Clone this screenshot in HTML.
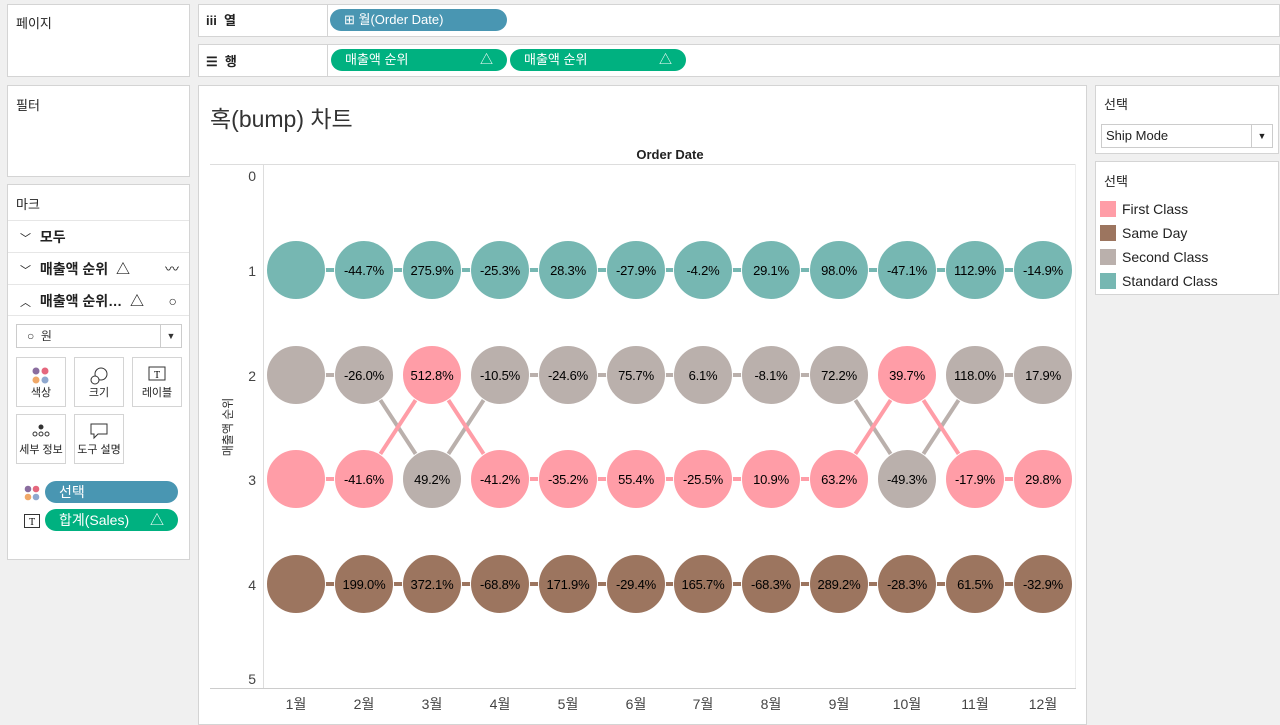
<!DOCTYPE html>
<html><head><meta charset="utf-8"><style>
*{box-sizing:border-box;margin:0;padding:0}
body{width:1280px;height:721px;background:#f0f0f0;font-family:"Liberation Sans","Noto Sans CJK KR",sans-serif;font-size:13px;color:#333;position:relative;overflow:hidden}
.p{position:absolute;background:#fff;border:1px solid #d4d4d4}
.t{position:absolute;font-size:13px;color:#222}
.pill{position:absolute;height:22px;border-radius:11px;color:#fff;font-size:13px;line-height:22px;padding-left:14px}
.g{background:#00b180}.b{background:#4996b2}
.row{position:absolute;left:0;right:0;height:32px;border-top:1px solid #e6e6e6;font-size:13px;font-weight:bold;line-height:32px;padding-left:12px;color:#222}
.row i{font-style:normal;font-weight:normal;font-size:11px;display:inline-block;width:16px}
.btn{position:absolute;width:50px;height:50px;border:1px solid #d4d4d4;background:#fff;font-size:11px;text-align:center;color:#222}
.btn span{position:absolute;bottom:6px;left:0;right:0}
.sw{position:absolute;left:4px;width:16px;height:16px}
.lg{position:absolute;left:26px;font-size:14px;color:#222}
</style></head><body>
<div class="p" style="left:7px;top:4px;width:183px;height:73px"><div class="t" style="left:8px;top:8px">페이지</div></div>
<div class="p" style="left:198px;top:4px;width:1082px;height:33px"></div>
<div class="t" style="left:206px;top:10px;font-weight:bold">iii&nbsp; 열</div>
<div style="position:absolute;left:327px;top:4px;width:1px;height:33px;background:#d4d4d4"></div>
<div class="pill b" style="left:330px;top:9px;width:177px;padding-left:14px">⊞ 월(Order Date)</div>
<div class="p" style="left:198px;top:44px;width:1082px;height:33px"></div>
<div class="t" style="left:206px;top:51px;font-weight:bold">☰&nbsp; 행</div>
<div style="position:absolute;left:327px;top:44px;width:1px;height:33px;background:#d4d4d4"></div>
<div class="pill g" style="left:331px;top:49px;width:176px">매출액 순위<span style="position:absolute;right:14px">△</span></div>
<div class="pill g" style="left:510px;top:49px;width:176px">매출액 순위<span style="position:absolute;right:14px">△</span></div>

<div class="p" style="left:7px;top:85px;width:183px;height:92px"><div class="t" style="left:8px;top:9px">필터</div></div>
<div class="p" style="left:7px;top:184px;width:183px;height:376px">
<div class="t" style="left:8px;top:9px">마크</div>
<div class="row" style="top:35px;font-size:14px"><i>﹀</i> 모두</div>
<div class="row" style="top:67px;font-size:14px"><i>﹀</i> 매출액 순위 &nbsp;△<span style="position:absolute;right:10px;font-weight:normal">〰</span></div>
<div class="row" style="top:99px;font-size:14px;border-bottom:1px solid #e6e6e6"><i>︿</i> 매출액 순위… &nbsp;△<span style="position:absolute;right:12px;font-weight:normal">○</span></div>
<div style="position:absolute;left:8px;top:139px;width:166px;height:24px;border:1px solid #ccc;font-size:12px;line-height:22px;padding-left:10px">○ &nbsp;원<span style="position:absolute;right:0;top:0;width:21px;height:22px;border-left:1px solid #ccc;text-align:center;font-size:9px">▼</span></div>
<div class="btn" style="left:8px;top:172px"><svg width="20" height="20" style="margin-top:8px"><circle cx="5" cy="5" r="3.5" fill="#8a6d9f"/><circle cx="14" cy="5" r="3.5" fill="#e5677d"/><circle cx="5" cy="14" r="3.5" fill="#f0a868"/><circle cx="14" cy="14" r="3.5" fill="#8fa8cf"/></svg><span>색상</span></div>
<div class="btn" style="left:66px;top:172px"><svg width="20" height="20" style="margin-top:8px" fill="none" stroke="#333"><circle cx="12" cy="8" r="6"/><circle cx="6" cy="14" r="4" fill="#fff"/></svg><span>크기</span></div>
<div class="btn" style="left:124px;top:172px"><svg width="18" height="16" style="margin-top:8px"><rect x="1" y="1" width="16" height="13" fill="none" stroke="#333"/><text x="9" y="12" font-size="10" text-anchor="middle" font-family="Liberation Serif">T</text></svg><span>레이블</span></div>
<div class="btn" style="left:8px;top:229px"><svg width="20" height="16" style="margin-top:8px" fill="none" stroke="#333"><circle cx="10" cy="4" r="2" fill="#333"/><circle cx="4" cy="11" r="2"/><circle cx="10" cy="11" r="2"/><circle cx="16" cy="11" r="2"/></svg><span>세부 정보</span></div>
<div class="btn" style="left:66px;top:229px"><svg width="20" height="18" style="margin-top:7px" fill="none" stroke="#333"><path d="M2 2h16v10H9l-4 4v-4H2z"/></svg><span>도구 설명</span></div>
<svg width="16" height="16" style="position:absolute;left:16px;top:300px"><circle cx="4" cy="4" r="3.3" fill="#8a6d9f"/><circle cx="12" cy="4" r="3.3" fill="#e5677d"/><circle cx="4" cy="12" r="3.3" fill="#f0a868"/><circle cx="12" cy="12" r="3.3" fill="#8fa8cf"/></svg>
<div class="pill b" style="left:37px;top:296px;width:133px;font-size:14px">선택</div>
<svg width="16" height="14" style="position:absolute;left:16px;top:329px"><rect x="0.5" y="0.5" width="15" height="13" fill="none" stroke="#333"/><text x="8" y="11" font-size="10" text-anchor="middle" font-family="Liberation Serif">T</text></svg>
<div class="pill g" style="left:37px;top:324px;width:133px;font-size:14px">합계(Sales)<span style="position:absolute;right:14px">△</span></div>
</div>

<div class="p" style="left:198px;top:85px;width:889px;height:640px"></div>
<div class="t" style="left:210px;top:100px;font-size:23px;color:#333">혹(bump) 차트</div>
<svg width="1280" height="721" style="position:absolute;left:0;top:0" font-family="Liberation Sans,Noto Sans CJK KR,sans-serif">
<line x1="210" y1="164.5" x2="1076" y2="164.5" stroke="#ddd"/>
<line x1="210" y1="688.5" x2="1076" y2="688.5" stroke="#ccc"/>
<line x1="263.5" y1="164" x2="263.5" y2="688" stroke="#ddd"/>
<line x1="1075.5" y1="164" x2="1075.5" y2="688" stroke="#eee"/>
<text x="670" y="159" font-size="13" font-weight="bold" text-anchor="middle" fill="#222">Order Date</text>
<g font-size="14" fill="#444" text-anchor="end"><text x="256" y="181">0</text><text x="256" y="276">1</text><text x="256" y="381">2</text><text x="256" y="485">3</text><text x="256" y="590">4</text><text x="256" y="684">5</text></g>
<text transform="translate(232,427) rotate(-90)" font-size="12" fill="#333" text-anchor="middle">매출액 순위</text>
<g font-size="14" fill="#444" text-anchor="middle">
<text x="296" y="709">1월</text><text x="364" y="709">2월</text><text x="432" y="709">3월</text><text x="500" y="709">4월</text><text x="568" y="709">5월</text><text x="636" y="709">6월</text><text x="703" y="709">7월</text><text x="771" y="709">8월</text><text x="839" y="709">9월</text><text x="907" y="709">10월</text><text x="975" y="709">11월</text><text x="1043" y="709">12월</text></g>
<g stroke-width="4" fill="none">
<polyline stroke="#76b7b2" points="296,270 1043,270"/>
<polyline stroke="#9c755f" points="296,584 1043,584"/>
<polyline stroke="#bab0ac" points="296,375 364,375 432,479 500,375 839,375 907,479 975,375 1043,375"/>
<polyline stroke="#ff9da7" points="296,479 364,479 432,375 500,479 839,479 907,375 975,479 1043,479"/>
</g>
<g stroke="#fff" stroke-width="1">
<g fill="#76b7b2"><circle cx="296" cy="270" r="29.5"/><circle cx="364" cy="270" r="29.5"/><circle cx="432" cy="270" r="29.5"/><circle cx="500" cy="270" r="29.5"/><circle cx="568" cy="270" r="29.5"/><circle cx="636" cy="270" r="29.5"/><circle cx="703" cy="270" r="29.5"/><circle cx="771" cy="270" r="29.5"/><circle cx="839" cy="270" r="29.5"/><circle cx="907" cy="270" r="29.5"/><circle cx="975" cy="270" r="29.5"/><circle cx="1043" cy="270" r="29.5"/></g>
<g fill="#9c755f"><circle cx="296" cy="584" r="29.5"/><circle cx="364" cy="584" r="29.5"/><circle cx="432" cy="584" r="29.5"/><circle cx="500" cy="584" r="29.5"/><circle cx="568" cy="584" r="29.5"/><circle cx="636" cy="584" r="29.5"/><circle cx="703" cy="584" r="29.5"/><circle cx="771" cy="584" r="29.5"/><circle cx="839" cy="584" r="29.5"/><circle cx="907" cy="584" r="29.5"/><circle cx="975" cy="584" r="29.5"/><circle cx="1043" cy="584" r="29.5"/></g>
<g fill="#bab0ac"><circle cx="296" cy="375" r="29.5"/><circle cx="364" cy="375" r="29.5"/><circle cx="432" cy="479" r="29.5"/><circle cx="500" cy="375" r="29.5"/><circle cx="568" cy="375" r="29.5"/><circle cx="636" cy="375" r="29.5"/><circle cx="703" cy="375" r="29.5"/><circle cx="771" cy="375" r="29.5"/><circle cx="839" cy="375" r="29.5"/><circle cx="907" cy="479" r="29.5"/><circle cx="975" cy="375" r="29.5"/><circle cx="1043" cy="375" r="29.5"/></g>
<g fill="#ff9da7"><circle cx="296" cy="479" r="29.5"/><circle cx="364" cy="479" r="29.5"/><circle cx="432" cy="375" r="29.5"/><circle cx="500" cy="479" r="29.5"/><circle cx="568" cy="479" r="29.5"/><circle cx="636" cy="479" r="29.5"/><circle cx="703" cy="479" r="29.5"/><circle cx="771" cy="479" r="29.5"/><circle cx="839" cy="479" r="29.5"/><circle cx="907" cy="375" r="29.5"/><circle cx="975" cy="479" r="29.5"/><circle cx="1043" cy="479" r="29.5"/></g>
</g>
<g font-size="13" fill="#000" text-anchor="middle" letter-spacing="-0.2">
<text x="364" y="275">-44.7%</text><text x="432" y="275">275.9%</text><text x="500" y="275">-25.3%</text><text x="568" y="275">28.3%</text><text x="636" y="275">-27.9%</text><text x="703" y="275">-4.2%</text><text x="771" y="275">29.1%</text><text x="839" y="275">98.0%</text><text x="907" y="275">-47.1%</text><text x="975" y="275">112.9%</text><text x="1043" y="275">-14.9%</text>
<text x="364" y="380">-26.0%</text><text x="432" y="380">512.8%</text><text x="500" y="380">-10.5%</text><text x="568" y="380">-24.6%</text><text x="636" y="380">75.7%</text><text x="703" y="380">6.1%</text><text x="771" y="380">-8.1%</text><text x="839" y="380">72.2%</text><text x="907" y="380">39.7%</text><text x="975" y="380">118.0%</text><text x="1043" y="380">17.9%</text>
<text x="364" y="484">-41.6%</text><text x="432" y="484">49.2%</text><text x="500" y="484">-41.2%</text><text x="568" y="484">-35.2%</text><text x="636" y="484">55.4%</text><text x="703" y="484">-25.5%</text><text x="771" y="484">10.9%</text><text x="839" y="484">63.2%</text><text x="907" y="484">-49.3%</text><text x="975" y="484">-17.9%</text><text x="1043" y="484">29.8%</text>
<text x="364" y="589">199.0%</text><text x="432" y="589">372.1%</text><text x="500" y="589">-68.8%</text><text x="568" y="589">171.9%</text><text x="636" y="589">-29.4%</text><text x="703" y="589">165.7%</text><text x="771" y="589">-68.3%</text><text x="839" y="589">289.2%</text><text x="907" y="589">-28.3%</text><text x="975" y="589">61.5%</text><text x="1043" y="589">-32.9%</text>
</g>
</svg>

<div class="p" style="left:1095px;top:85px;width:184px;height:69px">
<div class="t" style="left:8px;top:8px">선택</div>
<div style="position:absolute;left:5px;top:38px;width:172px;height:24px;border:1px solid #ccc;font-size:13px;line-height:22px;padding-left:4px;color:#222">Ship Mode<span style="position:absolute;right:0;top:0;width:21px;height:22px;border-left:1px solid #ccc;text-align:center;font-size:9px">▼</span></div>
</div>
<div class="p" style="left:1095px;top:161px;width:184px;height:134px">
<div class="t" style="left:8px;top:9px">선택</div>
<div class="sw" style="top:39px;background:#ff9da7"></div><div class="lg" style="top:39px">First Class</div>
<div class="sw" style="top:63px;background:#9c755f"></div><div class="lg" style="top:63px">Same Day</div>
<div class="sw" style="top:87px;background:#bab0ac"></div><div class="lg" style="top:87px">Second Class</div>
<div class="sw" style="top:111px;background:#76b7b2"></div><div class="lg" style="top:111px">Standard Class</div>
</div>
</body></html>
